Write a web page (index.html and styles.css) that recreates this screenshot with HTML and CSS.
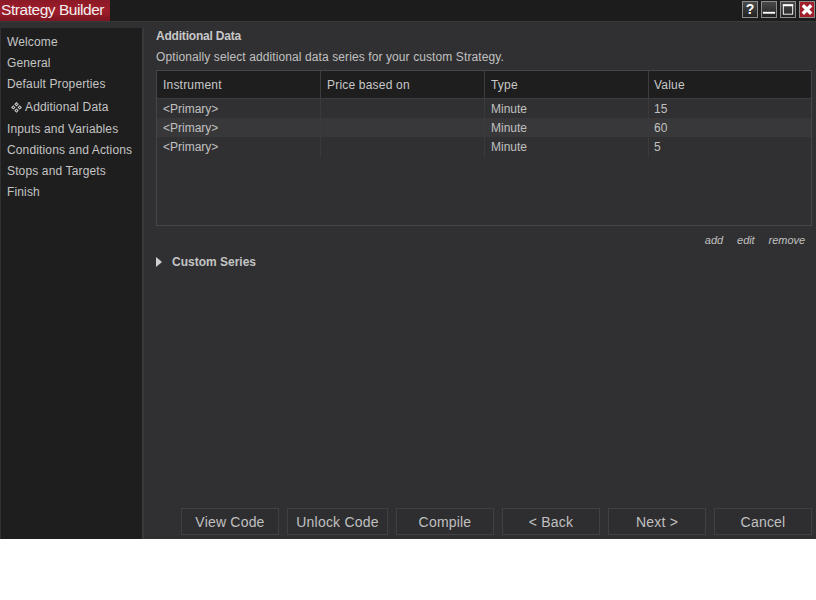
FILE: index.html
```html
<!DOCTYPE html>
<html lang="en">
<head>
<meta charset="utf-8">
<title>Strategy Builder</title>
<link rel="stylesheet" href="styles.css">
</head>
<body>
<div class="window">
  <header class="titlebar">
    <div class="title">Strategy Builder</div>
    <div class="winbtns">
      <div class="winbtn help">?</div>
      <div class="winbtn"><svg width="15" height="15" viewBox="0 0 15 15"><rect x="1" y="10" width="13" height="2" fill="#fff"/></svg></div>
      <div class="winbtn"><svg width="15" height="15" viewBox="0 0 15 15"><rect x="2.5" y="2.5" width="10" height="10" fill="none" stroke="#fff"/><rect x="2" y="2" width="11" height="2" fill="#fff"/></svg></div>
      <div class="winbtn close"><svg width="15" height="15" viewBox="0 0 15 15"><path d="M3 3l9 9M12 3l-9 9" stroke="#fff" stroke-width="3.600"/></svg></div>
    </div>
  </header>
  <div class="body">
    <nav class="sidebar">
      <div class="navitem">Welcome</div>
      <div class="navitem">General</div>
      <div class="navitem">Default Properties</div>
      <div class="navitem current"><svg class="navicon" width="11" height="11" viewBox="0 0 11 11"><path d="M5.500 0l2.200 2.200-2.200 2.200-2.200-2.200zM2.300 3.200l2.200 2.200-2.200 2.200-2.200-2.200zM8.700 3.200l2.200 2.200-2.200 2.200-2.200-2.200zM5.500 6.400l2.200 2.200-2.200 2.200-2.200-2.200z" fill="#d0d0d0"/><path d="M5.500 1.400l.8.8-.8.8-.8-.8zM2.300 4.600l.8.8-.8.8-.8-.8zM8.700 4.600l.8.8-.8.8-.8-.8zM5.500 7.800l.8.8-.8.8-.8-.8z" fill="#1e1e1e"/></svg>Additional Data</div>
      <div class="navitem">Inputs and Variables</div>
      <div class="navitem">Conditions and Actions</div>
      <div class="navitem">Stops and Targets</div>
      <div class="navitem">Finish</div>
    </nav>
    <main class="content">
      <h1 class="heading">Additional Data</h1>
      <p class="desc">Optionally select additional data series for your custom Strategy.</p>
      <div class="grid">
        <div class="row head">
          <div class="cell">Instrument</div>
          <div class="cell">Price based on</div>
          <div class="cell">Type</div>
          <div class="cell">Value</div>
        </div>
        <div class="row">
          <div class="cell">&lt;Primary&gt;</div>
          <div class="cell"></div>
          <div class="cell">Minute</div>
          <div class="cell">15</div>
        </div>
        <div class="row alt">
          <div class="cell">&lt;Primary&gt;</div>
          <div class="cell"></div>
          <div class="cell">Minute</div>
          <div class="cell">60</div>
        </div>
        <div class="row">
          <div class="cell">&lt;Primary&gt;</div>
          <div class="cell"></div>
          <div class="cell">Minute</div>
          <div class="cell">5</div>
        </div>
      </div>
      <div class="links">
        <span class="link">add</span>
        <span class="link">edit</span>
        <span class="link">remove</span>
      </div>
      <div class="expander">
        <svg width="6" height="10" viewBox="0 0 6 10"><path d="M0 0l6 5-6 5z" fill="#d0d0d0"/></svg>
        <span>Custom Series</span>
      </div>
      <div class="actions">
        <div class="btn">View Code</div>
        <div class="btn wide">Unlock Code</div>
        <div class="btn">Compile</div>
        <div class="btn">&lt; Back</div>
        <div class="btn">Next &gt;</div>
        <div class="btn">Cancel</div>
      </div>
    </main>
  </div>
</div>
</body>
</html>
```
FILE: styles.css
```css
* { box-sizing: border-box; }
html, body { margin: 0; padding: 0; background: #fff; }
body { font-family: "Liberation Sans", Arial, sans-serif; color: #c8c8c8; }
.window { width: 816px; height: 539px; background: #303032; display: flex; flex-direction: column; overflow: hidden; }
.titlebar { height: 22px; background: #1c1c1c; border-bottom: 1px solid #3a3a3c; display: flex; justify-content: space-between; flex-shrink: 0; }
.title { width: 110px; height: 21px; background: linear-gradient(#8a1a26, #a01c2a 50%, #7c1520); color: #f0f0f0; font-size: 15.5px; letter-spacing: -0.45px; line-height: 20px; padding-left: 1px; white-space: nowrap; }
.winbtns { display: flex; gap: 3px; padding: 1px 1px 0 0; }
.winbtn { width: 16px; height: 17px; border: 1px solid #8c8c8c; background: linear-gradient(#4a4a4a, #222); color: #fff; font-size: 14px; font-weight: bold; text-align: center; line-height: 15px; display: flex; align-items: center; justify-content: center; }
.winbtn.close { background: #a31e2b; }
.body { flex: 1; display: flex; min-height: 0; }
.sidebar { width: 143px; margin: 6px 0 0 1px; background: #1e1e1e; border-right: 2px solid #3a3a3c; padding-top: 4px; font-size: 12px; letter-spacing: 0.14px; flex-shrink: 0; }
.navitem { height: 21px; line-height: 21px; padding-left: 6px; white-space: nowrap; color: #c4c4c4; }
.navitem.current { height: 24px; line-height: 24px; padding-left: 10px; display: flex; align-items: center; gap: 3px; }
.navicon { flex-shrink: 0; }
.content { flex: 1; min-width: 0; padding: 7px 4px 4px 12px; display: flex; flex-direction: column; font-size: 12px; }
.heading { margin: 0; font-size: 12px; line-height: 14px; font-weight: bold; letter-spacing: -0.2px; color: #c8c8c8; }
.desc { margin: 7px 0 0; line-height: 14px; letter-spacing: 0.1px; color: #c0c0c0; }
.grid { margin-top: 6px; height: 156px; border: 1px solid #464648; }
.row { display: grid; grid-template-columns: 164px 164px 164px 1fr; height: 19px; }
.row.head { height: 28px; background: #1e1e1e; border-bottom: 1px solid #3c3c3e; }
.row.alt { background: #38383a; }
.cell { padding: 1px 0 0 6px; line-height: 19px; border-right: 1px solid #3a3a3c; color: #c0c0c0; white-space: nowrap; }
.cell:last-child { border-right: 0; padding-left: 5px; }
.row.head .cell { line-height: 27px; letter-spacing: 0.2px; border-right-color: #3c3c3e; color: #c8c8c8; }
.links { display: flex; justify-content: flex-end; gap: 14px; margin-top: 7px; padding-right: 7px; font-size: 11px; letter-spacing: -0.05px; line-height: 14px; font-style: italic; color: #c0c0c0; }
.expander { margin-top: 8px; display: flex; align-items: center; gap: 10px; font-weight: bold; line-height: 14px; color: #c4c4c4; }
.actions { margin-top: auto; display: flex; justify-content: flex-end; gap: 8px; }
.btn { width: 98px; height: 27px; border: 1px solid #404042; background: #2e2e30; color: #c0c0c0; font-size: 14px; letter-spacing: 0.2px; line-height: 26px; text-align: center; }
.btn.wide { width: 101px; }
```
